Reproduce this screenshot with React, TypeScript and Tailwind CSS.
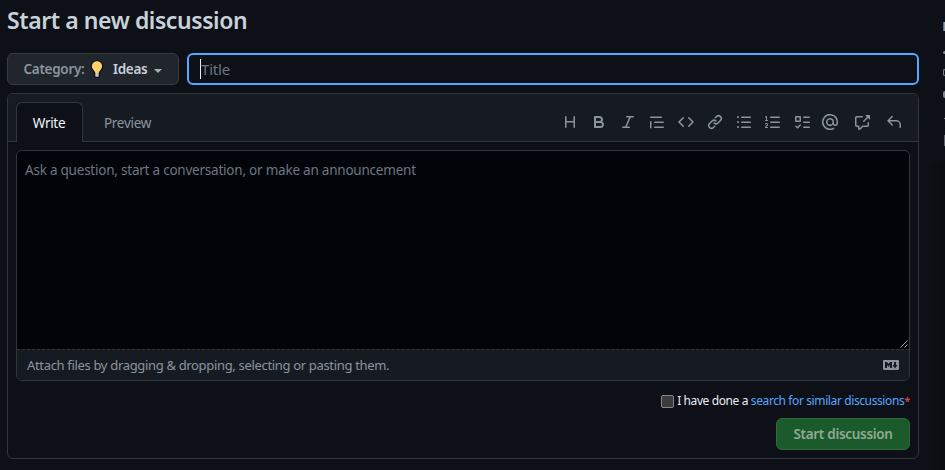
import React from "react";

const toolbar: { name: string; d: string; gap: string }[] = [
  { name: "Heading", gap: "", d: "M3.75 2a.75.75 0 0 1 .75.75V7h7V2.75a.75.75 0 0 1 1.5 0v10.5a.75.75 0 0 1-1.5 0V8.5h-7v4.75a.75.75 0 0 1-1.5 0V2.75A.75.75 0 0 1 3.75 2Z" },
  { name: "Bold", gap: "ml-[13px]", d: "M4 2h4.5a3.501 3.501 0 0 1 2.852 5.53A3.499 3.499 0 0 1 9.5 14H4a1 1 0 0 1-1-1V3a1 1 0 0 1 1-1Zm1 7v3h4.5a1.5 1.5 0 0 0 0-3Zm3.5-2a1.5 1.5 0 0 0 0-3H5v3Z" },
  { name: "Italic", gap: "ml-[13px]", d: "M6 2.75A.75.75 0 0 1 6.75 2h6.5a.75.75 0 0 1 0 1.5h-2.505l-3.858 9H9.25a.75.75 0 0 1 0 1.5h-6.5a.75.75 0 0 1 0-1.5h2.505l3.858-9H6.75A.75.75 0 0 1 6 2.75Z" },
  { name: "Quote", gap: "ml-[13px]", d: "M1.75 2.5h10.5a.75.75 0 0 1 0 1.5H1.75a.75.75 0 0 1 0-1.5Zm4 5h8.5a.75.75 0 0 1 0 1.5h-8.5a.75.75 0 0 1 0-1.5Zm0 5h8.5a.75.75 0 0 1 0 1.5h-8.5a.75.75 0 0 1 0-1.5ZM2.5 7.75v6a.75.75 0 0 1-1.5 0v-6a.75.75 0 0 1 1.5 0Z" },
  { name: "Code", gap: "ml-[13px]", d: "m11.28 3.22 4.25 4.25a.75.75 0 0 1 0 1.06l-4.25 4.25a.749.749 0 0 1-1.275-.326.749.749 0 0 1 .215-.734L13.94 8l-3.72-3.72a.749.749 0 0 1 .326-1.275.749.749 0 0 1 .734.215Zm-6.56 0a.751.751 0 0 1 1.042.018.751.751 0 0 1 .018 1.042L2.06 8l3.72 3.72a.749.749 0 0 1-.326 1.275.749.749 0 0 1-.734-.215L.47 8.53a.75.75 0 0 1 0-1.06Z" },
  { name: "Link", gap: "ml-[13px]", d: "m7.775 3.275 1.25-1.25a3.5 3.5 0 1 1 4.95 4.95l-2.5 2.5a3.5 3.5 0 0 1-4.95 0 .751.751 0 0 1 .018-1.042.751.751 0 0 1 1.042-.018 1.998 1.998 0 0 0 2.83 0l2.5-2.5a2.002 2.002 0 0 0-2.83-2.83l-1.25 1.25a.751.751 0 0 1-1.042-.018.751.751 0 0 1-.018-1.042Zm-4.69 9.64a1.998 1.998 0 0 0 2.83 0l1.25-1.25a.751.751 0 0 1 1.042.018.751.751 0 0 1 .018 1.042l-1.25 1.25a3.5 3.5 0 1 1-4.95-4.95l2.5-2.5a3.5 3.5 0 0 1 4.95 0 .751.751 0 0 1-.018 1.042.751.751 0 0 1-1.042.018 1.998 1.998 0 0 0-2.83 0l-2.5 2.5a1.998 1.998 0 0 0 0 2.83Z" },
  { name: "Unordered list", gap: "ml-[13px]", d: "M5.75 2.5h8.5a.75.75 0 0 1 0 1.5h-8.5a.75.75 0 0 1 0-1.5Zm0 5h8.5a.75.75 0 0 1 0 1.5h-8.5a.75.75 0 0 1 0-1.5Zm0 5h8.5a.75.75 0 0 1 0 1.5h-8.5a.75.75 0 0 1 0-1.5ZM2 14a1 1 0 1 1 0-2 1 1 0 0 1 0 2Zm1-6a1 1 0 1 1-2 0 1 1 0 0 1 2 0ZM2 4a1 1 0 1 1 0-2 1 1 0 0 1 0 2Z" },
  { name: "Numbered list", gap: "ml-[13px]", d: "M5 3.25a.75.75 0 0 1 .75-.75h8.5a.75.75 0 0 1 0 1.5h-8.5A.75.75 0 0 1 5 3.25Zm0 5a.75.75 0 0 1 .75-.75h8.5a.75.75 0 0 1 0 1.5h-8.5A.75.75 0 0 1 5 8.25Zm0 5a.75.75 0 0 1 .75-.75h8.5a.75.75 0 0 1 0 1.5h-8.5a.75.75 0 0 1-.75-.75ZM.924 10.32a.5.5 0 0 1-.851-.525l.001-.001.001-.002.002-.004.007-.011c.097-.144.215-.273.348-.384.228-.19.588-.392 1.068-.392.468 0 .858.181 1.126.484.259.294.377.673.377 1.038 0 .987-.686 1.495-1.156 1.845l-.047.035c-.303.225-.522.4-.654.597h1.357a.5.5 0 0 1 0 1H.5a.5.5 0 0 1-.5-.5c0-1.005.692-1.52 1.167-1.875l.035-.025c.531-.396.8-.625.8-1.078a.57.57 0 0 0-.128-.376C1.806 10.068 1.695 10 1.5 10a.658.658 0 0 0-.429.163.835.835 0 0 0-.144.153ZM2.003 2.5V6h.503a.5.5 0 0 1 0 1H.5a.5.5 0 0 1 0-1h.503V3.308l-.28.14a.5.5 0 0 1-.446-.895l1.003-.5a.5.5 0 0 1 .723.447Z" },
  { name: "Task list", gap: "ml-[13px]", d: "M2 2h4a1 1 0 0 1 1 1v4a1 1 0 0 1-1 1H2a1 1 0 0 1-1-1V3a1 1 0 0 1 1-1Zm4.655 8.595a.75.75 0 0 1 0 1.06L4.03 14.28a.75.75 0 0 1-1.06 0l-1.5-1.5a.749.749 0 0 1 .326-1.275.749.749 0 0 1 .734.215l.97.97 2.095-2.095a.75.75 0 0 1 1.06 0ZM9.75 2.5h5.5a.75.75 0 0 1 0 1.5h-5.5a.75.75 0 0 1 0-1.5Zm0 5h5.5a.75.75 0 0 1 0 1.5h-5.5a.75.75 0 0 1 0-1.5Zm0 5h5.5a.75.75 0 0 1 0 1.5h-5.5a.75.75 0 0 1 0-1.5Zm-7.25-9v3h3v-3Z" },
  { name: "Mention", gap: "ml-3", d: "M4.75 2.37a6.501 6.501 0 0 0 6.5 11.26.75.75 0 0 1 .75 1.298A7.999 7.999 0 0 1 .989 4.148 8 8 0 0 1 16 7.75v1.5a2.75 2.75 0 0 1-5.072 1.475 3.999 3.999 0 0 1-6.65-4.19A4 4 0 0 1 12 8v1.25a1.25 1.25 0 0 0 2.5 0V7.867a6.5 6.5 0 0 0-9.75-5.496ZM10.5 8a2.5 2.5 0 1 0-5 0 2.5 2.5 0 0 0 5 0Z" },
  { name: "Reference", gap: "ml-4", d: "M2.75 3.5a.25.25 0 0 0-.25.25v7.5c0 .138.112.25.25.25h2a.75.75 0 0 1 .75.75v2.19l2.72-2.72a.749.749 0 0 1 .53-.22h4.5a.25.25 0 0 0 .25-.25v-2.5a.75.75 0 0 1 1.5 0v2.5A1.75 1.75 0 0 1 13.25 13H9.06l-2.573 2.573A1.458 1.458 0 0 1 4 14.543V13H2.75A1.75 1.75 0 0 1 1 11.25v-7.5C1 2.784 1.784 2 2.75 2h5.5a.75.75 0 0 1 0 1.5ZM16 1.25v4.146a.25.25 0 0 1-.427.177L14.03 4.03l-3.75 3.75a.749.749 0 0 1-1.275-.326.749.749 0 0 1 .215-.734l3.75-3.75-1.543-1.543A.25.25 0 0 1 11.604 1h4.146a.25.25 0 0 1 .25.25Z" },
  { name: "Reply", gap: "ml-4", d: "M6.78 1.97a.75.75 0 0 1 0 1.06L3.81 6h6.44A4.75 4.75 0 0 1 15 10.75v2.5a.75.75 0 0 1-1.5 0v-2.5a3.25 3.25 0 0 0-3.25-3.25H3.81l2.97 2.97a.749.749 0 0 1-.326 1.275.749.749 0 0 1-.734-.215L1.47 7.28a.75.75 0 0 1 0-1.06l4.25-4.25a.75.75 0 0 1 1.06 0Z" },
];

function Bulb() {
  return (
    <svg className="ml-[5px] h-[18px] w-[14px] shrink-0" viewBox="0 0 14 18">
      <path d="M7 .3C3.4.3.8 3 .8 6.300c0 2.200 1.100 3.500 2.200 4.800.7.9 1.100 1.600 1.200 2.700v2.500c0 .8.600 1.400 1.400 1.400h2.800c.8 0 1.400-.6 1.400-1.400v-2.500c.1-1.100.5-1.800 1.200-2.700 1.100-1.300 2.200-2.600 2.200-4.800C13.200 3 10.600.3 7 .3Z" fill="#0b0d10" />
      <path d="M7 1.300c-3 0-5.100 2.200-5.100 5 0 1.900 1 3 2 4.200.7.8 1.200 1.600 1.400 2.500h3.400c.2-.9.7-1.700 1.400-2.500 1-1.200 2-2.300 2-4.200 0-2.800-2.100-5-5.100-5Z" fill="#ffcf6b" />
      <path d="M5.300 13h3.400v3.200c0 .3-.2.500-.5.500H5.800c-.3 0-.5-.2-.5-.5Z" fill="#c9c9c9" />
    </svg>
  );
}

export default function App() {
  return (
    <div className="flex h-[470px] w-[945px] overflow-hidden bg-[#0d1117] font-['Noto_Sans','Open_Sans',sans-serif] text-sm text-[#c9d1d9]">
      <main className="ml-[7px] flex w-[912px] shrink-0 flex-col">
        <h1 className="mt-1 h-[33px] whitespace-nowrap text-[23px] leading-[33px] font-semibold tracking-[-0.42px]">Start a new discussion</h1>

        <div className="mt-4 flex h-8 gap-2">
          <button className="flex w-[172px] items-center rounded-md border border-[#363b42] bg-[#21262d] pl-[15px] text-[13.500px] font-semibold whitespace-nowrap">
            <span className="w-[62px] pt-[2px] tracking-[-0.3px] text-[#8b949e]">Category:</span>
            <Bulb />
            <span className="ml-[9px] w-[34px] pt-[2px] tracking-[-0.3px]">Ideas</span>
            <span className="mt-[3px] ml-[7px] border-x-4 border-t-4 border-x-transparent border-t-[#a5adb5]" />
          </button>
          <div className="flex flex-1 items-center rounded-md border-2 border-[#58a6ff] bg-[#0d1117] pl-[11px]">
            <span className="h-5 w-px bg-[#e6edf3]" />
            <span className="pt-px text-[15px] tracking-[-0.2px] text-[#6e7681]">Title</span>
          </div>
        </div>

        <section className="mt-2 flex h-[366px] flex-col rounded-md border border-[#30363d]">
          <div className="flex h-12 shrink-0 rounded-t-[5px] border-b border-[#30363d] bg-[#161b22] pl-2">
            <div className="mt-2 -mb-px flex w-[67px] items-center justify-center rounded-t-md border border-b-0 border-[#30363d] bg-[#0d1117] pt-[3px] pr-px text-[13.500px] tracking-[-0.3px] text-[#f0f6fc]">Write</div>
            <div className="mt-2 ml-[21px] flex items-center pt-[5px] text-[13.500px] tracking-[-0.3px] text-[#8b949e]">Preview</div>
            <div className="mr-4 ml-auto flex items-center pt-[9px]">
              {toolbar.map((t) => (
                <svg key={t.name} aria-label={t.name} viewBox="0 0 16 16" className={`size-4 fill-[#8b949e] ${t.gap}`}>
                  <path d={t.d} />
                </svg>
              ))}
            </div>
          </div>

          <div className="mx-2 mt-2 flex h-[231px] shrink-0 flex-col overflow-hidden rounded-md border border-[#30363d]">
            <div className="relative flex-1 bg-[#010409] px-2 pt-[9px] text-[13.500px] leading-5 tracking-[-0.225px] text-[#6e7681]">
              Ask a question, start a conversation, or make an announcement
              <svg className="absolute right-[1px] bottom-[1px] size-2" viewBox="0 0 8 8" stroke="#b5b5b5" strokeWidth="0.9">
                <path d="M.5 7.500 7.500.5M4.500 7.500l3-3" />
              </svg>
            </div>
            <div className="flex h-[31px] items-center justify-between border-t border-dashed border-[#30363d] bg-[#161b22] pr-[10px] pl-[10px] text-[13px] text-[#8b949e]">
              <span className="tracking-[-0.33px]">Attach files by dragging &amp; dropping, selecting or pasting them.</span>
              <svg viewBox="0 0 16 16" className="size-4 fill-[#8b949e]">
                <path d="M14.850 3c.63 0 1.150.52 1.140 1.150v7.700c0 .63-.51 1.150-1.150 1.150H1.150C.52 13 0 12.480 0 11.840V4.150C0 3.520.52 3 1.150 3ZM9 11V5H7L5.500 7 4 5H2v6h2V8l1.500 1.920L7 8v3Zm2.990.5L14.500 8H13V5h-2v3H9.500Z" />
              </svg>
            </div>
          </div>

          <div className="mt-[10px] mr-2 flex h-5 items-center justify-end text-xs whitespace-nowrap">
            <span className="mt-px mr-[3px] size-[13px] rounded-[2px] border border-[#858585] bg-[#3b3b3b]" />
            <span className="tracking-[-0.39px] text-[#e6edf3]">I have done a <span className="text-[#58a6ff]">search for similar discussions</span><span className="text-[11px] text-[#f85149]">*</span></span>
          </div>
          <button className="mt-[7px] mr-2 flex h-8 w-[134px] shrink-0 items-center justify-center self-end rounded-md border border-[#2e6a3b] bg-[#1b5a2a] pt-px text-[13.500px] font-semibold tracking-[-0.3px] whitespace-nowrap text-[#8fa996]">Start discussion</button>
        </section>
      </main>

      {/* Sidebar, cut off by the window edge */}
      <aside className="flex flex-1 flex-col items-end">
        <span className="mt-[22px] h-[9px] w-[2px] bg-linear-to-r from-[#2b5c8c] to-[#b9b4a4]" />
        <span className="mt-[20px] h-[3px] w-[2px] rounded-l-full bg-[#7d858e]" />
        <span className="mt-[15px] h-[7px] w-[2px] rounded-l-full border border-r-0 border-[#7d858e]" />
        <span className="mt-[15px] h-[7px] w-[2px] rounded-l-full bg-[#7d858e]" />
        <span className="mt-[20px] h-px w-px bg-[#7d858e]" />
        <span className="mt-[16px] h-[11px] w-px bg-[#59616a]" />
        <span className="mt-[14px] w-[18px] flex-1 rounded-tl-[18px] bg-linear-to-r from-[#0d1117] to-[#090c10]" />
      </aside>
    </div>
  );
}
